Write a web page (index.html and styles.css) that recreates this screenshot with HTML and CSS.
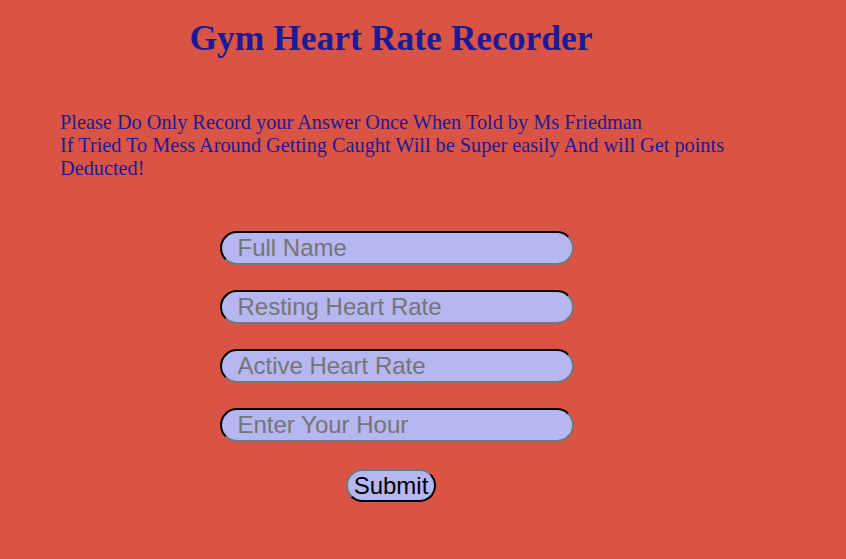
FILE: index.html
```html
<!DOCTYPE html>
<html>
<head>
<meta charset="utf-8">
<link rel="stylesheet" href="styles.css">
</head>
<body>
<div class="page">
  <h1 class="title">Gym Heart Rate Recorder</h1>
  <p class="notice">Please Do Only Record your Answer Once When Told by Ms Friedman<br>If Tried To Mess Around Getting Caught Will be Super easily And will Get points Deducted!</p>
  <form class="form">
    <input class="field" type="text" placeholder="Full Name">
    <input class="field" type="text" placeholder="Resting Heart Rate">
    <input class="field" type="text" placeholder="Active Heart Rate">
    <input class="field" type="text" placeholder="Enter Your Hour">
    <button class="submit" type="button">Submit</button>
  </form>
</div>
</body>
</html>
```
FILE: styles.css
```css
html, body {
  margin: 0;
  padding: 0;
  background: #d95445;
}
.page {
  width: 766px;
  margin-left: 8px;
  padding-top: 18px;
}
.title {
  font-family: "Liberation Serif", serif;
  font-weight: bold;
  font-size: 35.5px;
  color: #1b1b98;
  text-align: center;
  margin: 0;
  line-height: 41px;
}
.notice {
  font-family: "Liberation Serif", serif;
  font-size: 20.3px;
  line-height: 23px;
  color: #1b1b98;
  margin: 52px 0 0 52px;
  width: 720px;
}
.form {
  display: flex;
  flex-direction: column;
  align-items: center;
  gap: 25px;
  margin-top: 51px;
}
.field {
  box-sizing: border-box;
  width: 354px;
  height: 34px;
  margin-left: 11px;
  border: 2px inset #767676;
  border-top-color: #222;
  border-left-color: #222;
  border-radius: 17px;
  background: #b6b6f0;
  font-family: "Liberation Sans", sans-serif;
  font-size: 24px;
  padding: 0 16px;
  color: #000;
  outline: none;
}
.field::placeholder {
  color: #757575;
}
.submit {
  box-sizing: border-box;
  height: 33px;
  padding: 0 6px;
  margin-top: 2px;
  border: 2px outset #767676;
  border-top-color: #767676;
  border-left-color: #767676;
  border-right-color: #222;
  border-bottom-color: #222;
  border-radius: 17px;
  background: #b6b6f0;
  font-family: "Liberation Sans", sans-serif;
  font-size: 24px;
  color: #000;
}
```
